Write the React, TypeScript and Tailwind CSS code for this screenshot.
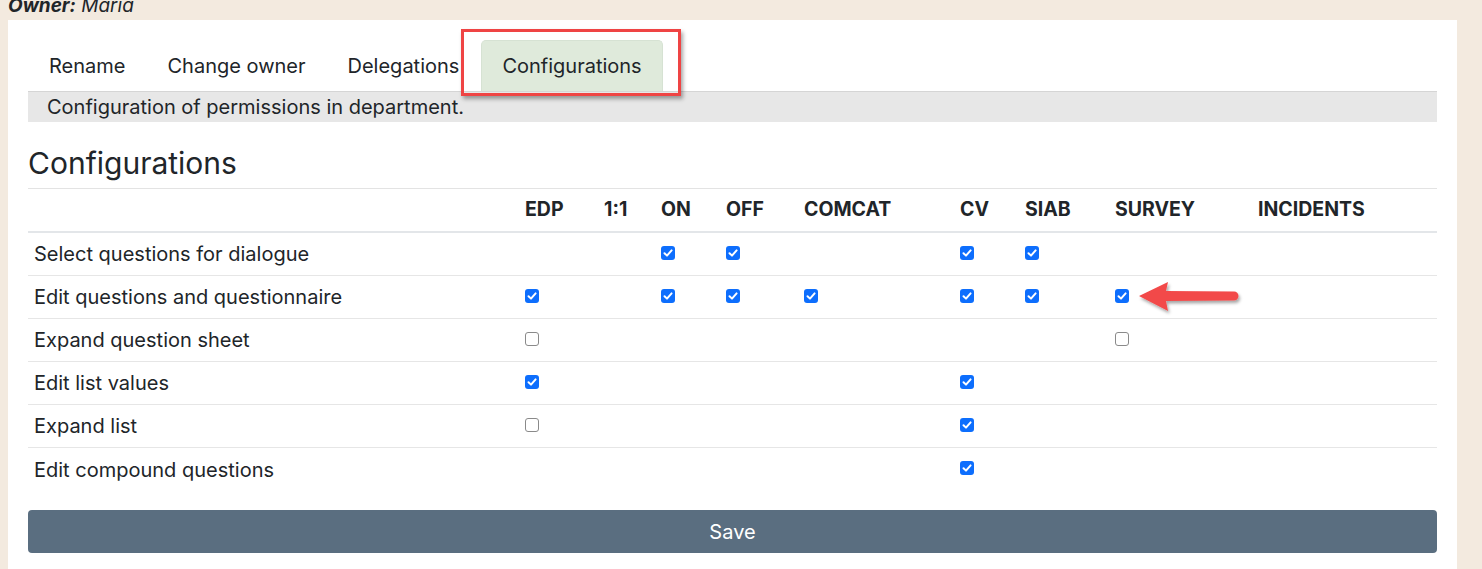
import React from 'react';

type Row = { label: string; cells: (null | boolean)[] };

const columns = ['EDP', '1:1', 'ON', 'OFF', 'COMCAT', 'CV', 'SIAB', 'SURVEY', 'INCIDENTS'];

// null = no checkbox, true = checked, false = unchecked
const rows: Row[] = [
  { label: 'Select questions for dialogue', cells: [null, null, true, true, null, true, true, null, null] },
  { label: 'Edit questions and questionnaire', cells: [true, null, true, true, true, true, true, true, null] },
  { label: 'Expand question sheet', cells: [false, null, null, null, null, null, null, false, null] },
  { label: 'Edit list values', cells: [true, null, null, null, null, true, null, null, null] },
  { label: 'Expand list', cells: [false, null, null, null, null, true, null, null, null] },
  { label: 'Edit compound questions', cells: [null, null, null, null, null, true, null, null, null] },
];

const Check: React.FC<{ checked: boolean }> = ({ checked }) =>
  checked ? (
    <span className="inline-flex w-[14px] h-[14px] rounded-[3px] bg-[#0d6efd] items-center justify-center">
      <svg viewBox="0 0 14 14" className="w-[14px] h-[14px]">
        <path d="M3.5 7.2 L6 9.6 L10.6 4.4" fill="none" stroke="#fff" strokeWidth="2" strokeLinecap="round" strokeLinejoin="round" />
      </svg>
    </span>
  ) : (
    <span className="inline-block w-[14px] h-[14px] rounded-[3px] border border-[#8a8a8a] bg-white" />
  );

const grid = 'grid grid-cols-[489px_79px_57px_65px_78px_156px_65px_90px_143px_187px]';

export default function App() {
  return (
    <div className="min-h-screen bg-[#f3eadf] font-['Inter',sans-serif] text-[#212529] overflow-hidden">
      <div className="h-6 pl-[8px] -mt-1 text-[19px] leading-[20px] italic">
        <b>Owner:</b> Maria
      </div>
      <div className="ml-2 mr-[25px] bg-white px-5 pt-5 pb-4">
        {/* tabs */}
        <div className="flex gap-[2px] pl-[1px] text-[20px] leading-none">
          <div className="px-5 h-[51px] flex items-center">Rename</div>
          <div className="px-5 h-[51px] flex items-center">Change owner</div>
          <div className="px-5 h-[51px] flex items-center">Delegations</div>
          <div className="relative">
            <div className="px-5 h-[51px] flex items-center bg-[#dfeadb] border border-[#d6e2d3] border-b-0 rounded-t-[5px]">
              Configurations
            </div>
            <div className="absolute -left-5 -right-[18px] -top-[11px] -bottom-[5px] border-[3px] border-[#ef4444] shadow-[2px_3px_4px_rgba(0,0,0,0.35)] pointer-events-none" />
          </div>
        </div>
        <div className="h-[31px] bg-[#e7e7e7] border-t border-[#d5d5d5] pl-[19px] flex items-center text-[20px]">
          Configuration of permissions in department.
        </div>

        <h2 className="text-[30px] leading-none mt-[26px] mb-[10px]">Configurations</h2>

        {/* table */}
        <div className="relative border-t border-[#e3e3e3]">
          <div className={`${grid} h-[44px] items-center border-b-2 border-[#e3e6e9] text-[19.5px] font-bold`}>
            <div />
            {columns.map(c => (
              <div key={c} className="pl-2">{c}</div>
            ))}
          </div>
          {rows.map((r, i) => (
            <div
              key={r.label}
              className={`${grid} h-[43px] items-center text-[20px] ${i < rows.length - 1 ? 'border-b border-[#e6e6e6]' : ''}`}
            >
              <div className="pl-[6px]">{r.label}</div>
              {r.cells.map((c, j) => (
                <div key={j} className="pl-2 flex items-center h-full pb-[3px]">
                  {c !== null && <Check checked={c} />}
                </div>
              ))}
            </div>
          ))}
          <svg className="absolute left-[1105px] top-[88px] w-[110px] h-[40px] overflow-visible" viewBox="0 0 110 40">
            <defs>
              <filter id="sh" x="-20%" y="-40%" width="150%" height="200%">
                <feDropShadow dx="1.5" dy="2.5" stdDeviation="1.5" floodColor="#000" floodOpacity="0.35" />
              </filter>
            </defs>
            <g filter="url(#sh)" fill="#f24a4a">
              <path d="M6 19 L35 5 L33 14 L101 14.5 A4.5 4.5 0 0 1 101 23.5 L33 24 L35 34 Z" />
            </g>
          </svg>
        </div>

        <button className="mt-[19px] w-full h-[43px] rounded-[4px] bg-[#5a6e80] text-white text-[20px]">Save</button>
      </div>
    </div>
  );
}
